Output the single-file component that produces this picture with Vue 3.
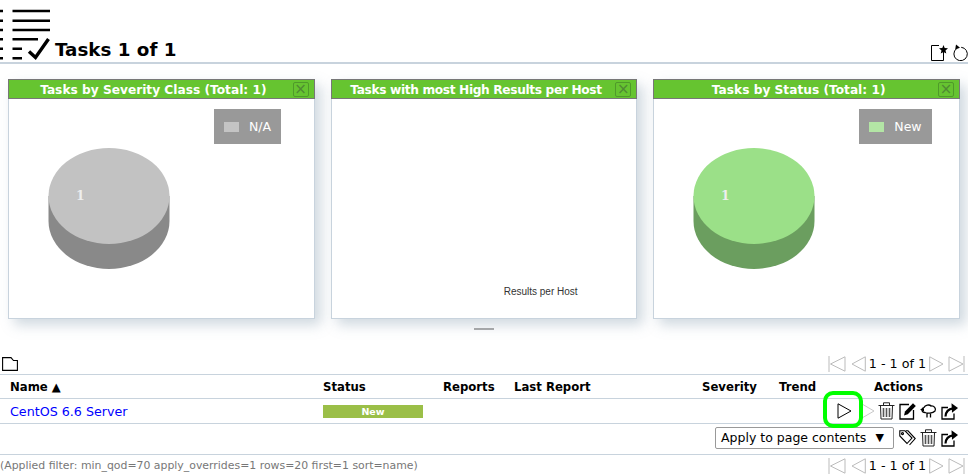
<script setup>
const panels = [
  { title: 'Tasks by Severity Class (Total: 1)', legend: 'N/A', swatch: '#c4c4c4', top: '#c2c2c2', side: '#898989' },
  { title: 'Tasks with most High Results per Host', xlabel: 'Results per Host' },
  { title: 'Tasks by Status (Total: 1)', legend: 'New', swatch: '#b3e5a5', top: '#9be088', side: '#6b9e5f' },
]
const columns = ['Status', 'Reports', 'Last Report', 'Severity', 'Trend', 'Actions']
</script>

<template>
  <div class="page">
    <header class="head">
      <svg class="logo" width="52" height="62" viewBox="0 0 52 62" fill="none" stroke="#000">
        <g stroke-width="2.6">
          <path d="M12.5 11H50M12.5 20.7H50M12.5 30H50M12.5 39.3H38M12.5 48.7H22M12.5 58.3H22" />
          <path d="M0 11H3M0 20.7H3M0 30H3M0 39.3H3M0 48.7H3M0 58.3H3" />
        </g>
        <path d="M29 51.5L35.5 57.5L48.5 39" stroke-width="3.4" />
      </svg>
      <h1 class="title">Tasks 1 of 1</h1>
      <div class="head-tools">
        <svg width="18" height="16" viewBox="0 0 18 16" fill="none" stroke="#000" stroke-width="1">
          <path d="M12.5 6V15.5H0.5V0.5H8" />
          <path d="M12.5 0L13.7 3.1L17 3.3L14.5 5.4L15.3 8.6L12.5 6.9L9.7 8.6L10.5 5.4L8 3.3L11.3 3.1Z" fill="#000" stroke="none" />
        </svg>
        <svg width="15" height="17" viewBox="0 0 15 17" fill="none" stroke="#000" stroke-width="1">
          <path d="M3.6 4.6A6.7 6.7 0 1 0 8.2 3.3" />
          <path d="M3 0.5L7 3.8L2.2 5.6Z" fill="#000" stroke="none" />
        </svg>
      </div>
    </header>

    <section class="panels">
      <article v-for="p in panels" :key="p.title" class="panel">
        <div class="panel-bar">
          <span>{{ p.title }}</span>
          <span class="close">×</span>
        </div>
        <div class="panel-body">
          <div v-if="p.legend" class="legend">
            <i class="swatch" :style="{ background: p.swatch }"></i>{{ p.legend }}
          </div>
          <svg v-if="p.legend" class="pie" width="122" height="124" viewBox="0 0 122 124">
            <path d="M0.5 48V73A60.5 48 0 0 0 121.5 73V48Z" :fill="p.side" />
            <ellipse cx="61" cy="48" rx="60.5" ry="48" :fill="p.top" />
            <text x="28" y="52" class="pie-num">1</text>
          </svg>
          <div v-if="p.xlabel" class="xlabel">{{ p.xlabel }}</div>
        </div>
      </article>
    </section>

    <div class="splitter"></div>

    <div class="pager-row">
      <svg width="16" height="14" viewBox="0 0 16 14" fill="none" stroke="#000" stroke-width="1.1">
        <path d="M0.6 0.6V13.4H15.4V3.5H11.5L9 0.6Z" />
      </svg>
      <div class="pager">
        <svg width="20" height="16" viewBox="0 0 20 16" class="pg"><path d="M1 0V16M17 0.8V15.2L2.5 8Z" /></svg>
        <svg width="15" height="16" viewBox="0 0 15 16" class="pg"><path d="M14.3 0.8V15.2L1 8Z" /></svg>
        <span>1 - 1 of 1</span>
        <svg width="15" height="16" viewBox="0 0 15 16" class="pg"><path d="M0.7 0.8V15.2L14 8Z" /></svg>
        <svg width="18" height="16" viewBox="0 0 18 16" class="pg"><path d="M17 0V16M2 0.8V15.2L16 8Z" /></svg>
      </div>
    </div>

    <div class="grid-row head-row">
      <div class="c-name">Name ▲</div>
      <div v-for="c in columns" :key="c">{{ c }}</div>
    </div>

    <div class="grid-row task-row">
      <a class="c-name task-link">CentOS 6.6 Server</a>
      <div class="status">New</div>
      <div class="actions">
        <span class="highlight"></span>
        <svg width="15" height="16" viewBox="0 0 15 16" fill="none" stroke="#000" stroke-width="1"><path d="M1 0.8V15.2L14 8Z" /></svg>
        <svg class="play-off" width="14" height="16" viewBox="0 0 14 16" fill="none" stroke="#c8c8c8" stroke-width="1"><path d="M0.7 0.8V15.2L13 8Z" /></svg>
        <svg width="17" height="18" viewBox="0 0 17 18" fill="none" stroke="#222" stroke-width="1">
          <path d="M0.5 3.5H16.5M5.5 3V0.8H11.5V3M2.5 4L3 17H14L14.5 4" />
          <path d="M5.5 6V15M8.5 6V15M11.5 6V15" stroke-width="1.6" stroke="#555" />
        </svg>
        <svg width="17" height="18" viewBox="0 0 17 18" fill="none" stroke="#000" stroke-width="1.3">
          <path d="M10 2.5H1V17H14.5V8" />
          <path d="M5 13.5L6 9.5L14 1.2L16.8 4L8.8 12.2Z" fill="#000" stroke="none" />
        </svg>
        <svg width="17" height="16" viewBox="0 0 17 16" fill="none" stroke="#000" stroke-width="1.3">
          <path d="M5 9.5C1.5 9.5 1 5.5 4 4.5C5 2 9.5 1.2 11 3C14 2.5 16.5 5.5 15 8C13 10.5 10.5 9.8 8 10.2C7 10.4 6 10 5 9.5Z" />
          <path d="M7 10.5V14.5M10.5 10.5V14.5" />
          <path d="M0 6.5L4 5V8.5Z" fill="#000" stroke="none" />
        </svg>
        <svg width="17" height="18" viewBox="0 0 17 18" fill="none" stroke="#000" stroke-width="1.3">
          <path d="M7 5.5H1V17H13V11.5" />
          <path d="M4.5 14.5C4.8 9.5 7.5 6.8 12 6.3" stroke-width="2.2" />
          <path d="M10.5 1.2L17 6L11 10.8Z" fill="#000" stroke="none" />
        </svg>
      </div>
    </div>

    <div class="bulk-row">
      <div class="select">Apply to page contents<span class="caret">▼</span></div>
      <svg width="17" height="16" viewBox="0 0 17 16" fill="none" stroke="#000" stroke-width="1.1">
        <path d="M0.8 0.8H6L13 8L8 13.5L0.8 6Z" />
        <path d="M7 0.8H9L16.2 8.5L10.5 15" />
        <circle cx="3.5" cy="3.6" r="1" />
      </svg>
      <svg width="17" height="18" viewBox="0 0 17 18" fill="none" stroke="#222" stroke-width="1">
        <path d="M0.5 3.5H16.5M5.5 3V0.8H11.5V3M2.5 4L3 17H14L14.5 4" />
        <path d="M5.5 6V15M8.5 6V15M11.5 6V15" stroke-width="1.6" stroke="#555" />
      </svg>
      <svg width="17" height="18" viewBox="0 0 17 18" fill="none" stroke="#000" stroke-width="1.3">
        <path d="M7 5.5H1V17H13V11.5" />
        <path d="M4.5 14.5C4.8 9.5 7.5 6.8 12 6.3" stroke-width="2.2" />
        <path d="M10.5 1.2L17 6L11 10.8Z" fill="#000" stroke="none" />
      </svg>
    </div>

    <footer class="foot">
      <span class="filter">(Applied filter: min_qod=70 apply_overrides=1 rows=20 first=1 sort=name)</span>
      <div class="pager">
        <svg width="20" height="16" viewBox="0 0 20 16" class="pg"><path d="M1 0V16M17 0.8V15.2L2.5 8Z" /></svg>
        <svg width="15" height="16" viewBox="0 0 15 16" class="pg"><path d="M14.3 0.8V15.2L1 8Z" /></svg>
        <span>1 - 1 of 1</span>
        <svg width="15" height="16" viewBox="0 0 15 16" class="pg"><path d="M0.7 0.8V15.2L14 8Z" /></svg>
        <svg width="18" height="16" viewBox="0 0 18 16" class="pg"><path d="M17 0V16M2 0.8V15.2L16 8Z" /></svg>
      </div>
    </footer>
  </div>
</template>

<style>
html, body { margin: 0; background: #fff; overflow: hidden; }
</style>

<style scoped>
.page {
  width: 968px;
  height: 475px;
  overflow: hidden;
  font-family: "DejaVu Sans", Verdana, sans-serif;
  font-size: 12px;
  color: #000;
  background: #fff;
}
svg { display: block; flex: none; }
.head {
  height: 62px;
  display: flex;
  align-items: flex-end;
  border-bottom: 2px solid #c8d3dd;
}
.title {
  margin: 0 0 1px 3px;
  font-size: 18.3px;
  line-height: 22px;
  font-weight: 700;
}
.head-tools {
  margin-left: auto;
  display: flex;
  gap: 4px;
  padding-bottom: 1px;
  align-items: flex-end;
}
.panels {
  display: grid;
  grid-template-columns: repeat(3, 1fr);
  gap: 16px;
  padding: 15px 8px 0;
}
.panel {
  height: 240px;
  box-sizing: border-box;
  border: 1px solid #c8d3dd;
  border-top: 0;
  box-shadow: 6px 6px 12px rgba(120, 145, 165, 0.35);
  background: #fff;
  display: flex;
  flex-direction: column;
}
.panel-bar {
  position: relative;
  height: 20px;
  box-sizing: border-box;
  margin: 0 -1px;
  padding-right: 16px;
  background: #66c430;
  border: 1px solid #777;
  color: #fff;
  font-weight: 700;
  font-size: 12.2px;
  line-height: 20px;
  text-align: center;
}
.panel:nth-child(2) .panel-bar { letter-spacing: -0.35px; }
.close {
  position: absolute;
  right: 5px;
  top: 2px;
  width: 14px;
  height: 13px;
  border: 1px solid #4f9a2a;
  border-radius: 2px;
  color: #4f8a33;
  font-size: 15px;
  line-height: 13px;
  font-weight: 400;
  letter-spacing: 0;
  text-align: center;
}
.panel-body {
  position: relative;
  flex: 1;
}
.legend {
  position: absolute;
  top: 10px;
  left: 205px;
  height: 35px;
  padding: 0 10px;
  box-sizing: border-box;
  display: flex;
  align-items: center;
  gap: 10px;
  background: #999;
  color: #fff;
  font-size: 12.5px;
}
.swatch {
  width: 15px;
  height: 10px;
}
.pie {
  position: absolute;
  left: 39px;
  top: 49px;
}
.pie-num {
  font-family: "DejaVu Serif", serif;
  font-size: 12.5px;
  font-weight: 700;
  fill: #eee;
}
.xlabel {
  position: absolute;
  left: 172px;
  top: 187px;
  font-family: "Liberation Sans", Arial, sans-serif;
  font-size: 10px;
  color: #333;
}
.splitter {
  width: 20px;
  height: 2px;
  margin: 9px auto 0;
  background: #aaa;
}
.pager-row {
  height: 33px;
  padding: 12px 0 0 2px;
  box-sizing: border-box;
  display: flex;
  justify-content: space-between;
  align-items: center;
  margin-top: 11px;
}
.pager {
  display: flex;
  align-items: center;
  gap: 3px;
  padding-right: 3px;
  font-size: 12.7px;
}
.pg {
  fill: none;
  stroke: #bbb;
  stroke-width: 1;
}
.grid-row {
  display: grid;
  grid-template-columns: 323px 120px 71px 188px 77px 95px 1fr;
  align-items: center;
  border-top: 1px solid #c8d3dd;
  box-sizing: border-box;
}
.c-name { padding-left: 10px; }
.head-row {
  height: 24px;
  font-weight: 700;
  font-size: 11.7px;
}
.task-row {
  height: 25px;
  grid-template-columns: 323px 100px 1fr;
  font-size: 12.7px;
}
.task-link { color: #00f; }
.status {
  height: 13px;
  background: #9bbf48;
  color: #fff;
  font-size: 9.5px;
  font-weight: 700;
  line-height: 13px;
  text-align: center;
}
.actions {
  position: relative;
  display: flex;
  justify-content: flex-end;
  align-items: center;
  gap: 4px;
  padding-right: 10px;
}
.play-off { margin: 0 -1px 0 5px; }
.highlight {
  position: absolute;
  left: 400px;
  top: -11px;
  width: 40px;
  height: 37px;
  box-sizing: border-box;
  border: 4px solid #0f0;
  border-radius: 10px;
}
.bulk-row {
  height: 31px;
  border-top: 1px solid #c8d3dd;
  box-sizing: border-box;
  display: flex;
  justify-content: flex-end;
  align-items: center;
  gap: 4px;
  padding: 0 10px 3px 0;
}
.select {
  width: 179px;
  height: 22px;
  margin-right: 1px;
  box-sizing: border-box;
  border: 1px solid #999;
  border-radius: 2px;
  display: flex;
  justify-content: space-between;
  align-items: center;
  padding: 0 9px 0 5px;
  font-size: 12.5px;
}
.caret { font-size: 11px; }
.foot {
  border-top: 1px solid #c8d3dd;
  display: flex;
  justify-content: space-between;
  align-items: center;
  height: 21px;
}
.filter {
  color: #777;
  font-size: 10.9px;
}
</style>
